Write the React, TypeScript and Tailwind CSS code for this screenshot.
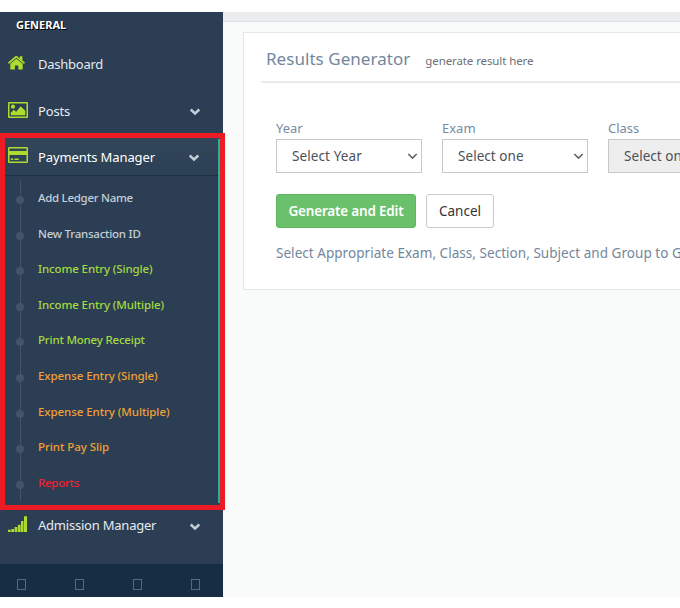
type LedgerLink = { label: string; tone: string; height: string };

const ledgerLinks: LedgerLink[] = [
  { label: "Add Ledger Name", tone: "text-[#c6ced7] tracking-[-0.29px]", height: "h-9" },
  { label: "New Transaction ID", tone: "text-[#c6ced7] tracking-[-0.24px]", height: "h-[35px]" },
  { label: "Income Entry (Single)", tone: "text-[#a4d940] tracking-[-0.12px]", height: "h-9" },
  { label: "Income Entry (Multiple)", tone: "text-[#a4d940] tracking-[-0.12px]", height: "h-[35px]" },
  { label: "Print Money Receipt", tone: "text-[#a4d940] tracking-[-0.2px]", height: "h-9" },
  { label: "Expense Entry (Single)", tone: "text-[#f2a033] tracking-[-0.08px]", height: "h-9" },
  { label: "Expense Entry (Multiple)", tone: "text-[#f2a033] tracking-[-0.07px]", height: "h-[35px]" },
  { label: "Print Pay Slip", tone: "text-[#f2a033] tracking-[-0.06px]", height: "h-9" },
  { label: "Reports", tone: "text-[#f0202f] tracking-[-0.27px]", height: "h-[35px]" },
];

function HomeIcon() {
  return (
    <svg width="18" height="16" viewBox="0 0 18 16" fill="#aedb2c">
      <path d="M2.300 8.800 8.500 3.700 14.700 8.800V13.900a.7.7 0 0 1-.7.7H10.300V10.600H6.900V14.600H3a.7.7 0 0 1-.7-.7Z" />
      <path d="M8.500.7 11.800 3.400V1.300H14.400V5.500L17 7.600 16 8.900 8.500 2.800 1 8.900 0 7.600 7.600 1Z" />
    </svg>
  );
}

function ImageIcon() {
  return (
    <svg width="20" height="17" viewBox="0 0 20 17" fill="#aedb2c">
      <path fillRule="evenodd" d="M1 0H19a1 1 0 0 1 1 1V15a1 1 0 0 1-1 1H1a1 1 0 0 1-1-1V1A1 1 0 0 1 1 0ZM1.500 1.500V14.500H18.500V1.500Z" />
      <circle cx="5" cy="4.700" r="2.100" />
      <path d="M2.700 13.200V10.700L5.800 7.700l2.400 2L12.700 4.300 17.300 8.800V13.200Z" />
    </svg>
  );
}

function CardIcon() {
  return (
    <svg width="20" height="17" viewBox="0 0 20 17" fill="#aedb2c">
      <path fillRule="evenodd" d="M1.200 0H18.800A1.200 1.200 0 0 1 20 1.200V14.800A1.200 1.200 0 0 1 18.800 16H1.200A1.200 1.200 0 0 1 0 14.800V1.200A1.200 1.200 0 0 1 1.200 0ZM1.500 1.400V4H18.500V1.400ZM1.500 8V14.400H18.500V8Z" />
      <path d="M2.800 11.500H5.300V13H2.800ZM6.500 11.500H10.800V13H6.500Z" />
    </svg>
  );
}

function SignalIcon() {
  return (
    <svg width="20" height="17" viewBox="0 0 20 17" fill="#aedb2c">
      <path d="M0 13.700H2.700V16H0ZM3.300 13H6V16H3.300ZM6.600 11H9.300V16H6.600ZM9.900 8.700H12.600V16H9.900ZM13 5H15.500V16H13ZM16 .2H19V16H16Z" />
    </svg>
  );
}

function MenuChevron() {
  return (
    <svg width="12" height="8" viewBox="0 0 12 8" fill="none" stroke="#c3cdd8" strokeWidth="2.500">
      <path d="M1.700 1.500 6 5.500 10.300 1.500" />
    </svg>
  );
}

function SelectBox({ label, value, tint, valueTone }: { label: string; value: string; tint: string; valueTone: string }) {
  return (
    <div className="w-[146px] shrink-0">
      <div className="h-[21px] text-[13px] leading-[20px] text-[#788a9f]">{label}</div>
      <div className={`flex h-[34px] items-center justify-between border border-[#c6c8ca] pr-[3px] pl-[15px] text-[13.5px] text-[#4c5157] ${tint}`}>
        <span className={valueTone}>{value}</span>
        <svg width="11" height="8" viewBox="0 0 11 8" fill="none" stroke="#666" strokeWidth="1.700">
          <path d="M1.300 2 5.500 6 9.700 2" />
        </svg>
      </div>
    </div>
  );
}

function Sidebar() {
  return (
    <aside className="flex h-[585px] w-[223px] shrink-0 flex-col bg-[#2b3e54] text-[13px] text-[#e6ebf0]">
      <div className="h-7 pl-4 text-[11px] leading-[26px] font-bold text-white [text-shadow:1px_1px_0_#000]">GENERAL</div>
      <a className="flex h-12 items-center pl-2">
        <span className="w-[30px] pb-[2px]"><HomeIcon /></span>
        <span className="pt-[2px] tracking-[-0.25px]">Dashboard</span>
      </a>
      <a className="flex h-[46px] items-center pr-[22px] pl-2">
        <span className="w-[30px] pb-[2px]"><ImageIcon /></span>
        <span className="flex-1 pt-[2px] tracking-[-0.15px]">Posts</span>
        <span className="pt-[2px]"><MenuChevron /></span>
      </a>
      <div className="relative mt-[3px] flex h-[368px] shrink-0 flex-col">
        <a className="flex h-[39px] items-center border-b border-[#1e2f42] bg-linear-to-b from-[#334659] to-[#2c4056] pr-[23px] pl-2">
          <span className="w-[30px] pb-px"><CardIcon /></span>
          <span className="flex-1 pt-[3px] tracking-[-0.11px] text-white">Payments Manager</span>
          <span className="pt-[3px]"><MenuChevron /></span>
        </a>
        <div className="mt-[4px] ml-5 h-[321px] border-l border-[#41546a] text-[11.5px] font-medium">
          {ledgerLinks.map((link) => (
            <a key={link.label} className={`flex items-center ${link.height}`}>
              <span className="mt-1 -ml-[5px] size-[8px] rounded-full bg-[#41546a]" />
              <span className={`ml-[14px] ${link.tone}`}>{link.label}</span>
            </a>
          ))}
        </div>
        <div className="absolute top-[2px] left-[218px] h-[364px] w-[2px] bg-[#22b498]" />
        <div className="absolute -top-[4px] left-0 h-[377px] w-[225px] border-[5px] border-[#ed1c24]" />
      </div>
      <a className="flex h-[59px] items-start pr-[22px] pl-2">
        <span className="w-[30px] pt-[11px]"><SignalIcon /></span>
        <span className="flex-1 pt-[11px] tracking-[-0.22px]">Admission Manager</span>
        <span className="pt-[18px]"><MenuChevron /></span>
      </a>
      <div className="flex flex-1 items-center gap-[49px] bg-[#172d44] pt-[8px] pl-[17px]">
        {[0, 1, 2, 3].map((slot) => (
          <span key={slot} className="h-[11px] w-[9px] shrink-0 border border-[#4c6a8a]" />
        ))}
      </div>
    </aside>
  );
}

export default function App() {
  return (
    <div className="h-[608px] w-[680px] overflow-hidden bg-white pt-3 font-['Noto_Sans',sans-serif]">
      <div className="flex h-[585px]">
        <Sidebar />
        <main className="min-w-0 flex-1 bg-[#f9fbfb]">
          <div className="h-[10px] border-b border-[#dcdedf] bg-[#ebecee]" />
          <section className="mt-[10px] ml-5 h-[258px] border border-r-0 border-[#e3e7ec] bg-white pt-[10px] pl-[17px] whitespace-nowrap">
            <header className="flex h-10 items-baseline border-b-2 border-[#e6eaeb] pl-[5px]">
              <h1 className="text-[17px] leading-[32px] tracking-[0.04px] text-[#73879c]">Results Generator</h1>
              <span className="ml-[15px] text-[11.5px] tracking-[-0.1px] text-[#6d7176]">generate result here</span>
            </header>
            <div className="pt-[35px] pl-[15px]">
              <div className="flex gap-5">
                <SelectBox label="Year" value="Select Year" tint="bg-white" valueTone="tracking-[0.1px]" />
                <SelectBox label="Exam" value="Select one" tint="bg-white" valueTone="tracking-[0.05px]" />
                <SelectBox label="Class" value="Select one" tint="bg-[#eeeeee]" valueTone="tracking-[0.05px]" />
              </div>
              <div className="mt-[21px] flex gap-[10px]">
                <button className="h-[34px] w-[140px] rounded-[3px] border border-[#5cb85c] bg-[#6bc16b] pt-px text-[13.5px] font-semibold tracking-[-0.2px] text-white">Generate and Edit</button>
                <button className="h-[34px] w-[68px] rounded-[3px] border border-[#c9cbcd] bg-white text-[13.5px] text-[#333]">Cancel</button>
              </div>
              <p className="mt-[15px] text-[13.5px] leading-[20px] tracking-[0.04px] text-[#73879c]">Select Appropriate Exam, Class, Section, Subject and Group to G</p>
            </div>
          </section>
        </main>
      </div>
    </div>
  );
}
